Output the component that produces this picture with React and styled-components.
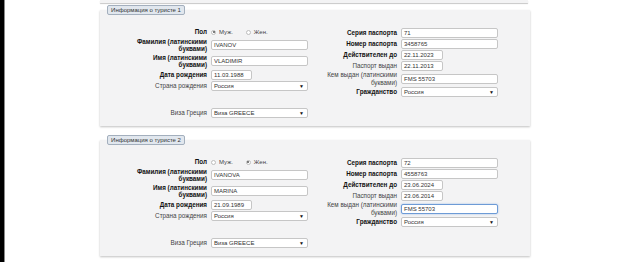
import React from 'react';
import styled, { createGlobalStyle, css } from 'styled-components';

const Global = createGlobalStyle`
  html, body { margin: 0; padding: 0; background: #fff; }
  body {
    font-family: "Liberation Sans", Arial, sans-serif;
    width: 617px;
    height: 262px;
    overflow: hidden;
  }
`;

const Page = styled.div`
  display: flex;
  height: 262px;
`;

const SideBar = styled.div`
  flex: none;
  width: 4px;
  background: #000;
  border-right: 1px solid #8a8a8a;
`;

const Content = styled.div`
  flex: none;
  width: 430px;
  margin-left: 95px;
  display: flex;
  flex-direction: column;
`;

const PrevTail = styled.div`
  height: 3px;
  width: 428px;
  background: #f3f3f4;
  box-shadow: 0 1px 1px rgba(0, 0, 0, 0.22);
`;

const Panel = styled.section`
  display: flow-root;
  box-sizing: border-box;
  height: 116px;
  margin-top: ${(p) => p.$gap}px;
  background: #f3f3f4;
  box-shadow: 0 1px 2px rgba(0, 0, 0, 0.25);
`;

const Legend = styled.div`
  box-sizing: border-box;
  width: 78px;
  height: 10px;
  margin: -5px 0 0 7px;
  border: 1px solid #a3afbd;
  border-radius: 2px;
  background: #e1e7ee;
  color: #333;
  font-size: 6px;
  line-height: 8px;
  text-align: center;
  white-space: nowrap;
`;

const Body = styled.div`
  display: flex;
  margin-top: 12px;
`;

const Column = styled.div`
  display: flex;
  flex-direction: column;
  margin-left: ${(p) => p.$offset}px;
`;

const Row = styled.div`
  display: flex;
  align-items: center;
  height: ${(p) => p.$h}px;
`;

const Label = styled.div`
  flex: none;
  box-sizing: border-box;
  width: 86px;
  padding-right: 4px;
  text-align: right;
  font-size: 6.3px;
  line-height: 7.5px;
  color: ${(p) => (p.$bold ? '#111' : '#444')};
  font-weight: ${(p) => (p.$bold ? 700 : 400)};
`;

const Field = styled.div`
  flex: none;
  width: 97px;
  display: flex;
  align-items: center;
`;

const Input = styled.div`
  box-sizing: border-box;
  width: ${(p) => p.$w}px;
  height: 10px;
  padding: 0 2px;
  border: 1px solid #c6c6c6;
  border-radius: 2px;
  background: #fff;
  color: #333;
  font-size: 6px;
  line-height: 8px;
  white-space: nowrap;
  overflow: hidden;
  ${(p) =>
    p.$focus &&
    css`
      border-color: #6d9bd6;
      box-shadow: 0 0 2px rgba(80, 140, 220, 0.55);
    `}
`;

const Select = styled.div`
  box-sizing: border-box;
  width: 97px;
  height: 10px;
  padding: 0 3px 0 2px;
  display: flex;
  align-items: center;
  justify-content: space-between;
  border: 1px solid #c6c6c6;
  border-radius: 2px;
  background: #fff;
  color: #333;
  font-size: 6px;
  line-height: 8px;
`;

const Arrow = styled.span`
  font-size: 5px;
  color: #111;
`;

const RadioGroup = styled.div`
  display: flex;
  align-items: center;
  font-size: 6px;
  color: #444;
`;

const RadioItem = styled.label`
  display: flex;
  align-items: center;
  gap: 3px;
  margin-right: 13px;
`;

const Radio = styled.span`
  box-sizing: border-box;
  width: 5px;
  height: 5px;
  border-radius: 50%;
  border: 1px solid #bdbdbd;
  background: #fff;
  display: flex;
  align-items: center;
  justify-content: center;
  &::after {
    content: '';
    width: 2px;
    height: 2px;
    border-radius: 50%;
    background: ${(p) => (p.$on ? '#555' : 'transparent')};
  }
`;

const tourists = [
  {
    n: 1,
    male: true,
    last: 'IVANOV',
    first: 'VLADIMIR',
    birth: '11.03.1988',
    series: '71',
    number: '3458765',
    valid: '22.11.2023',
    issued: '22.11.2013',
    by: 'FMS 55703',
    focus: false,
  },
  {
    n: 2,
    male: false,
    last: 'IVANOVA',
    first: 'MARINA',
    birth: '21.09.1989',
    series: '72',
    number: '4558763',
    valid: '23.06.2024',
    issued: '23.06.2014',
    by: 'FMS 55703',
    focus: true,
  },
];

function SelectBox({ value }) {
  return (
    <Select>
      <span>{value}</span>
      <Arrow>▼</Arrow>
    </Select>
  );
}

function TouristPanel({ t, gap }) {
  return (
    <Panel $gap={gap}>
      <Legend>Информация о туристе {t.n}</Legend>
      <Body>
        <Column $offset={25}>
          <Row $h={10}>
            <Label $bold>Пол</Label>
            <Field>
              <RadioGroup>
                <RadioItem>
                  <Radio $on={t.male} />
                  Муж.
                </RadioItem>
                <RadioItem>
                  <Radio $on={!t.male} />
                  Жен.
                </RadioItem>
              </RadioGroup>
            </Field>
          </Row>
          <Row $h={16}>
            <Label $bold>
              Фамилия (латинскими
              <br />
              буквами)
            </Label>
            <Field>
              <Input $w={97}>{t.last}</Input>
            </Field>
          </Row>
          <Row $h={16}>
            <Label $bold>
              Имя (латинскими
              <br />
              буквами)
            </Label>
            <Field>
              <Input $w={97}>{t.first}</Input>
            </Field>
          </Row>
          <Row $h={11}>
            <Label $bold>Дата рождения</Label>
            <Field>
              <Input $w={41}>{t.birth}</Input>
            </Field>
          </Row>
          <Row $h={11}>
            <Label>Страна рождения</Label>
            <Field>
              <SelectBox value="Россия" />
            </Field>
          </Row>
          <Row $h={16} />
          <Row $h={11}>
            <Label>Виза Греция</Label>
            <Field>
              <SelectBox value="Виза GREECE" />
            </Field>
          </Row>
        </Column>
        <Column $offset={7}>
          <Row $h={11}>
            <Label $bold>Серия паспорта</Label>
            <Field>
              <Input $w={97}>{t.series}</Input>
            </Field>
          </Row>
          <Row $h={11}>
            <Label $bold>Номер паспорта</Label>
            <Field>
              <Input $w={97}>{t.number}</Input>
            </Field>
          </Row>
          <Row $h={11}>
            <Label $bold>Действителен до</Label>
            <Field>
              <Input $w={42}>{t.valid}</Input>
            </Field>
          </Row>
          <Row $h={11}>
            <Label>Паспорт выдан</Label>
            <Field>
              <Input $w={42}>{t.issued}</Input>
            </Field>
          </Row>
          <Row $h={15}>
            <Label>
              Кем выдан (латинскими
              <br />
              буквами)
            </Label>
            <Field>
              <Input $w={97} $focus={t.focus}>
                {t.by}
              </Input>
            </Field>
          </Row>
          <Row $h={11}>
            <Label $bold>Гражданство</Label>
            <Field>
              <SelectBox value="Россия" />
            </Field>
          </Row>
        </Column>
      </Body>
    </Panel>
  );
}

export default function App() {
  return (
    <>
      <Global />
      <Page>
        <SideBar />
        <Content>
          <PrevTail />
          <TouristPanel t={tourists[0]} gap={7} />
          <TouristPanel t={tourists[1]} gap={14} />
        </Content>
      </Page>
    </>
  );
}
